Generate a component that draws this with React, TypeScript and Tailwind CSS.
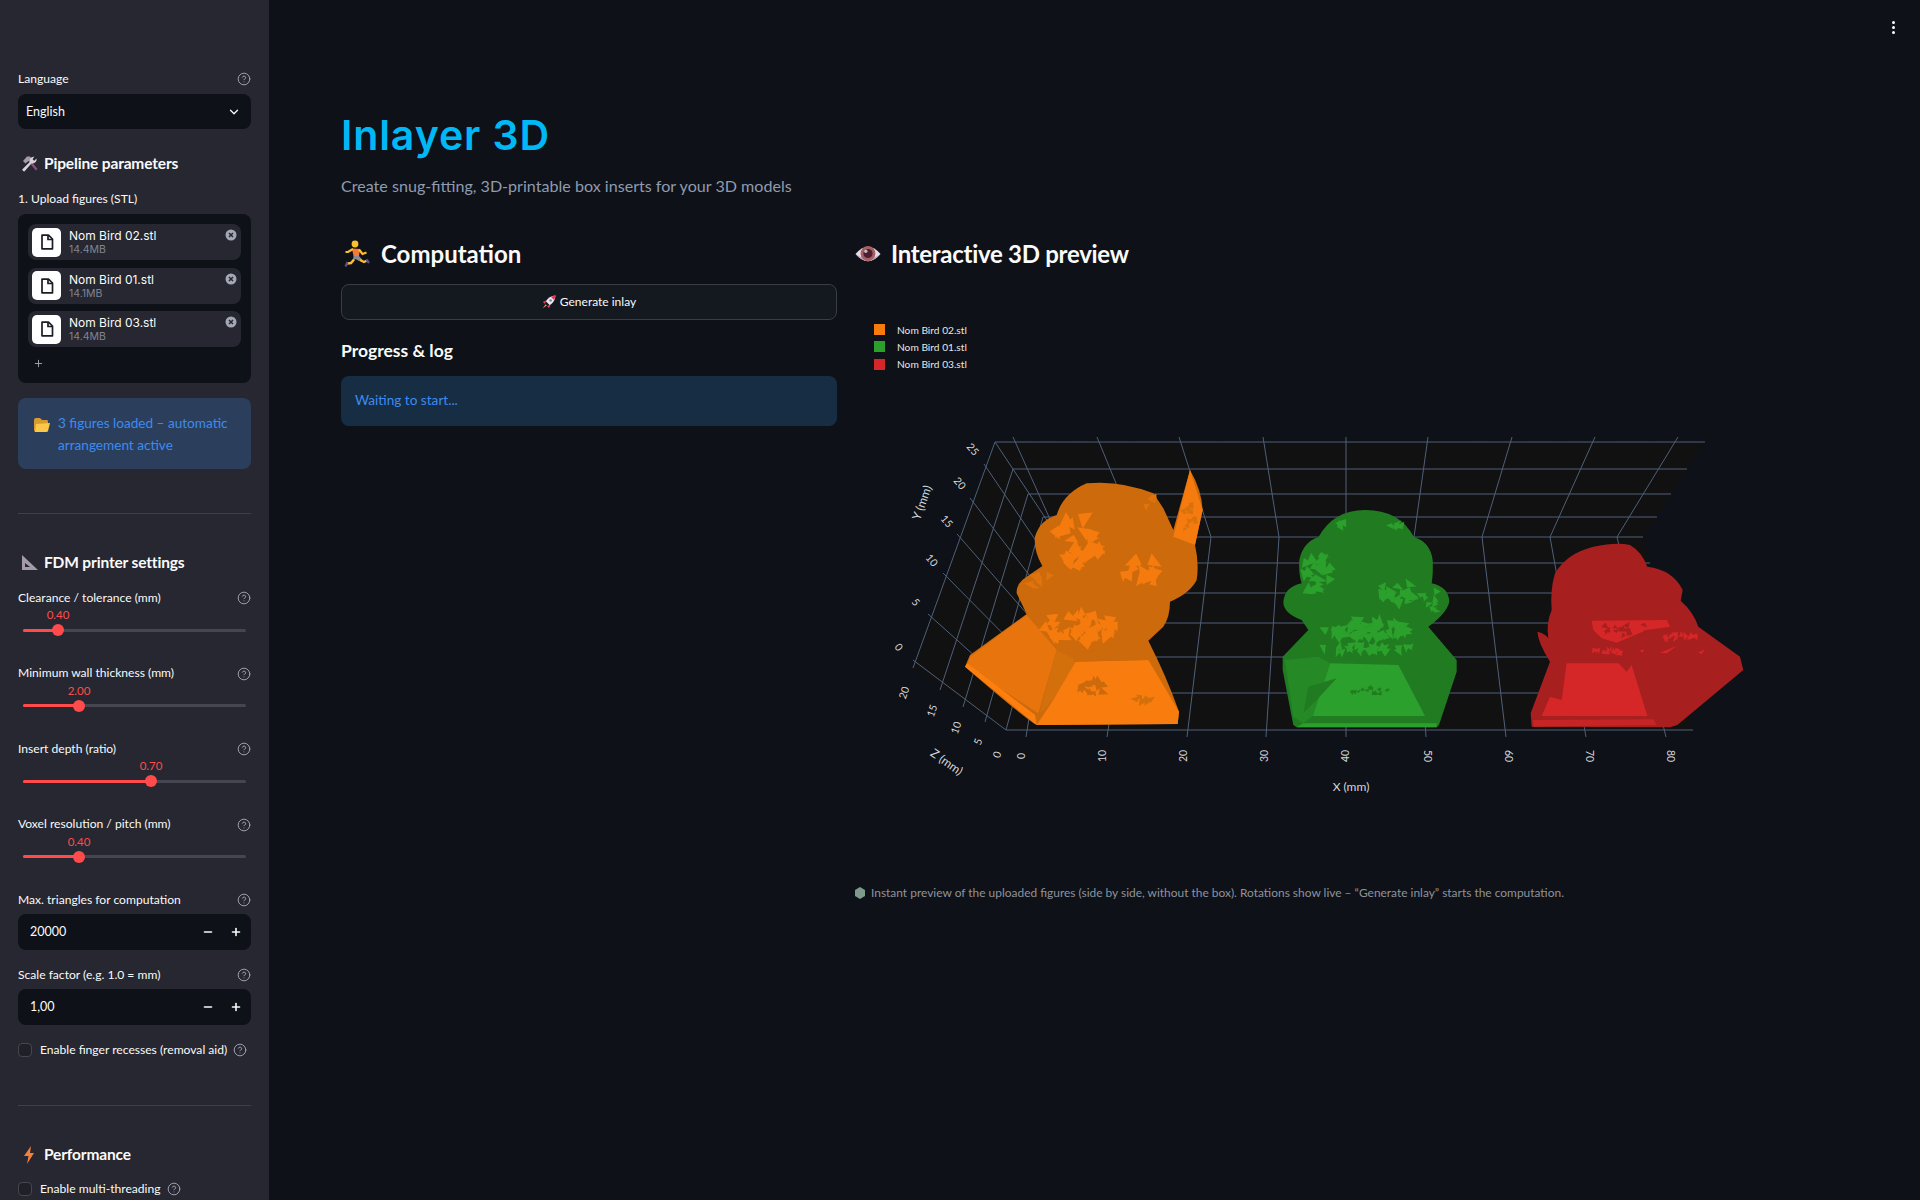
import React from 'react';
import { ChevronDown, CircleHelp, Minus, Plus } from 'lucide-react';

const HelpIcon = () => <CircleHelp className="h-[14px] w-[14px] text-[#a3a8b4] shrink-0" strokeWidth={1.6} />;

const FieldLabel = ({ text }: { text: string }) => <div className="flex h-[18px] items-center justify-between text-[12.1px] text-[#fafafa]">
    <span>{text}</span>
    <HelpIcon />
  </div>;

const SectionTitle = ({ icon, text, className }: { icon: React.ReactNode; text: string; className: string }) => <div className={`flex h-6 items-center text-[15.5px] font-bold tracking-[-0.01em] text-[#fafafa] ${className}`}>
    <span className="flex w-[26px] shrink-0 items-center pl-[3px]">{icon}</span>
    <span>{text}</span>
  </div>;

const ToolsIcon = () => <svg width="18" height="18" viewBox="0 0 18 18">
    <path d="M8.5 8 L14.8 15.6 L16.6 14 L10.4 6.4 Z" fill="#8c4f7a" />
    <path d="M2 6 L6 1.5 L9 1.5 L12 5 L9.5 7.5 L7.5 6 L4.5 8.5 Z" fill="#a79aa8" />
    <path d="M2 16 L1.2 14.4 L9 6.8 Q8.4 3.6 10.8 2.2 L13.4 1.6 L11.5 4.2 L13.2 5.8 L15.6 3.6 Q16 7.4 12 8.6 L10.6 8.2 L3.4 16.4 Z" fill="#d9d2da" />
  </svg>;

const RulerIcon = () => <svg width="18" height="18" viewBox="0 0 18 18">
    <path fillRule="evenodd" d="M1 1 L17 16 L1 16 Z M4 9 L4 13 L9 13 Z" fill="#a59aa8" />
  </svg>;

const BoltIcon = () => <svg width="18" height="18" viewBox="0 0 18 18">
    <path d="M10 0 L3 10 L7.5 10 L6 18 L13 7 L9 7 Z" fill="#f4803c" />
  </svg>;

const FolderIcon = () => <svg width="18" height="16" viewBox="0 0 18 16">
    <path d="M1 3 Q1 1 3 1 L7 1 L9 3 L14 3 Q15 3 15 5 L15 14 L3 15 Q1 15 1 13 Z" fill="#d99a2e" />
    <path d="M3 7 L17 6 L15 14 Q15 15 13 15 L2 15 Z" fill="#fdc84a" />
  </svg>;

const RunnerIcon = () => <svg width="26" height="28" viewBox="0 0 26 28">
    <circle cx="11" cy="4" r="3.4" fill="#fbc02d" />
    <path d="M8 8.5 L16 9 L15 16 L9.5 16 Z" fill="#f4793b" />
    <path d="M9 9 L4 12 L1.5 12" stroke="#fbc02d" strokeWidth="2.2" fill="none" />
    <path d="M15 9.5 L18.5 14 L22.5 12.5" stroke="#fbc02d" strokeWidth="2.2" fill="none" />
    <path d="M9.5 16 L15 16 L18.5 20 L15 21 L11.5 19 L9 21 Z" fill="#8b8794" />
    <path d="M10 19.5 L7 23 L3 23.5" stroke="#fbc02d" strokeWidth="2.4" fill="none" />
    <path d="M16 20 L20 22 L23 20.5" stroke="#fbc02d" strokeWidth="2.4" fill="none" />
    <path d="M3.5 22 L1.5 26.5" stroke="#5e4f8c" strokeWidth="2.2" />
    <path d="M22.5 19.5 L25 23" stroke="#5e4f8c" strokeWidth="2.2" />
  </svg>;

const RocketIcon = () => <svg width="14" height="14" viewBox="0 0 14 14">
    <path d="M13.5 0.5 Q7 1 3.8 6.2 L7.8 10.2 Q13 7 13.5 0.5 Z" fill="#efe6ee" />
    <path d="M13.5 0.5 Q11 0.8 9 2 L12 5 Q13.2 3 13.5 0.5 Z" fill="#e8375f" />
    <circle cx="8.6" cy="5.4" r="1.2" fill="#5c7fa8" />
    <path d="M4.4 5.2 L0.8 7 L3 9 Z M8.8 9.6 L7 13.2 L5 11 Z" fill="#e8375f" />
    <path d="M3.6 9.2 L0.6 13.4 L4.8 10.4 Z" fill="#fb8c3c" />
  </svg>;

const EyeIcon = () => <svg width="26" height="22" viewBox="0 0 26 22">
    <path d="M0.5 11 Q13 -3.5 25.5 11 Q13 25.5 0.5 11 Z" fill="#e6dde8" />
    <path d="M0.5 11 Q13 25.5 25.5 11 Q13 20 0.5 11 Z" fill="#b9a4c0" />
    <circle cx="13" cy="10.5" r="7.4" fill="#a5605f" />
    <circle cx="13" cy="10.5" r="4.6" fill="#4d1e33" />
    <circle cx="10.8" cy="8.2" r="1.7" fill="#c9b5bd" />
  </svg>;

const FileIcon = () => <svg width="14" height="16" viewBox="0 0 14 16">
    <path d="M2 1.2 L8.5 1.2 L12.5 5 L12.5 14.8 L2 14.8 Z" fill="none" stroke="#1b1d24" strokeWidth="1.7" strokeLinejoin="round" />
    <path d="M8 1.5 L8 5.5 L12 5.5" fill="none" stroke="#1b1d24" strokeWidth="1.7" />
  </svg>;

const FileRow = ({ name, size }: { name: string; size: string }) => <div className="relative flex h-9 items-center rounded-[8px] bg-[#262730] pl-1">
    <div className="flex h-[29px] w-[29px] items-center justify-center rounded-[5px] bg-white">
      <FileIcon />
    </div>
    <div className="ml-2 flex flex-col">
      <span className="text-[12px] leading-[15px] text-[#fafafa]">{name}</span>
      <span className="text-[10.5px] leading-[13px] text-[#808495]">{size}</span>
    </div>
    <svg className="absolute right-[4px] top-[5px]" width="12" height="12" viewBox="0 0 12 12">
      <circle cx="6" cy="6" r="5.5" fill="#a3a8b4" />
      <path d="M4 4 L8 8 M8 4 L4 8" stroke="#262730" strokeWidth="1.5" />
    </svg>
  </div>;

const SliderField = ({ label, value, left }: { label: string; value: string; left: number }) => {
  return <div className="h-[75.5px]">
      <FieldLabel text={label} />
      <div className="relative h-10">
        <span className="absolute top-0 -translate-x-1/2 text-[11.5px] leading-4 text-[#ff4b4b]" style={{ left: left + 'px' }}>{value}</span>
        <div className="absolute left-[5px] right-[5px] top-[21.5px] h-[3px] rounded-full bg-[#454650]" />
        <div className="absolute left-[5px] top-[21.5px] h-[3px] rounded-l-full bg-[#ff4b4b]" style={{ width: left - 5 + 'px' }} />
        <div className="absolute top-[17px] h-3 w-3 -translate-x-1/2 rounded-full bg-[#ff4b4b]" style={{ left: left + 'px' }} />
      </div>
    </div>;
};

const NumberField = ({ value }: { value: string }) => <div className="mt-[5px] flex h-9 items-center rounded-[8px] bg-[#0e1117] pl-3 pr-[9px] text-[12.5px] text-[#fafafa]">
    <span className="flex-1 pt-px">{value}</span>
    <Minus className="h-[12px] w-[12px]" strokeWidth={3.2} />
    <Plus className="ml-[16px] h-[12px] w-[12px]" strokeWidth={3.2} />
  </div>;

const CheckRow = ({ label, className }: { label: string; className: string }) => <div className={`flex h-[18px] items-center whitespace-nowrap text-[12.1px] text-[#fafafa] ${className}`}>
    <span className="mr-2 h-[14px] w-[14px] shrink-0 rounded-[4px] border border-[#454650] bg-[#1f2028]" />
    <span className="mr-[6px]">{label}</span>
    <HelpIcon />
  </div>;

const Sidebar = () => <aside className="h-[1200px] w-[269px] shrink-0 overflow-hidden bg-[#262730] px-[18px] pt-[70px]">
    <FieldLabel text="Language" />
    <div className="mt-[6px] flex h-[35px] items-center justify-between rounded-[8px] bg-[#0e1117] px-2 text-[12.5px] text-[#fafafa]">
      <span className="pt-px">English</span>
      <ChevronDown className="mr-[2px] h-[14px] w-[14px]" strokeWidth={2.2} />
    </div>
    <SectionTitle icon={<ToolsIcon />} text="Pipeline parameters" className="mt-[23px]" />
    <div className="mt-[14px] h-[18px] text-[12.1px] leading-[18px] text-[#fafafa]">1. Upload figures (STL)</div>
    <div className="mt-[6px] h-[169px] rounded-[8px] bg-[#0e1117] px-[10px] pt-[10px] font-[family-name:Inter,sans-serif]">
      <div className="flex flex-col gap-[7.5px]">
        <FileRow name="Nom Bird 02.stl" size="14.4MB" />
        <FileRow name="Nom Bird 01.stl" size="14.1MB" />
        <FileRow name="Nom Bird 03.stl" size="14.4MB" />
      </div>
      <Plus className="ml-[5px] mt-[11px] h-[11px] w-[11px] text-[#a3a8b4]" strokeWidth={2} />
    </div>
    <div className="mt-[15px] flex h-[71px] items-start rounded-[8px] bg-[#2b3f5c] pl-[15px] pr-2 pt-[15px] text-[13.6px] leading-[21.5px] text-[#3d8bf0]">
      <span className="mr-[7px] mt-[4px] shrink-0"><FolderIcon /></span>
      <span>3 figures loaded – automatic arrangement active</span>
    </div>
    <div className="mt-[44px] h-px bg-[#3d3f49]" />
    <SectionTitle icon={<RulerIcon />} text="FDM printer settings" className="mt-[37px]" />
    <div className="mt-[14px]">
      <SliderField label="Clearance / tolerance (mm)" value="0.40" left={40} />
      <SliderField label="Minimum wall thickness (mm)" value="2.00" left={61} />
      <SliderField label="Insert depth (ratio)" value="0.70" left={133} />
      <SliderField label="Voxel resolution / pitch (mm)" value="0.40" left={61} />
    </div>
    <FieldLabel text="Max. triangles for computation" />
    <NumberField value="20000" />
    <div className="mt-4">
      <FieldLabel text="Scale factor (e.g. 1.0 = mm)" />
    </div>
    <NumberField value="1,00" />
    <CheckRow label="Enable finger recesses (removal aid)" className="mt-4" />
    <div className="mt-[46px] h-px bg-[#3d3f49]" />
    <SectionTitle icon={<BoltIcon />} text="Performance" className="mt-[37px]" />
    <CheckRow label="Enable multi-threading" className="mt-[13px]" />
  </aside>;

const xLines = [[1013, 1058, 1026], [1097, 1138, 1107], [1179, 1211, 1187], [1263, 1279, 1266], [1346, 1346, 1346], [1428, 1414, 1426], [1512, 1482, 1506], [1595, 1550, 1586], [1678, 1617, 1666]];
const wallRows = [[442, 995, 1705], [469, 1013, 1687], [494, 1028, 1671], [517, 1043, 1657], [537, 1058, 1643]];
const floorRows = [[563, 1051, 1650], [593, 1043, 1658], [623, 1035, 1665], [657, 1026, 1674], [693, 1016, 1683], [730, 1006, 1693]];
const sideZ = [[995, 442, 913, 668], [1013, 469, 940, 690], [1028, 494, 963, 707], [1043, 517, 985, 722], [1058, 537, 1006, 730]];
const sideY = [[913, 660, 1006, 730], [928, 614, 1016, 693], [943, 573, 1026, 657], [957, 534, 1035, 623], [970, 498, 1043, 593], [984, 464, 1051, 563], [995, 442, 1058, 537]];
const xTicks: [string, number, number][] = [['0', 1022, -90], ['10', 1103, -90], ['20', 1184, -90], ['30', 1265, -90], ['40', 1346, -90], ['50', 1427, 90], ['60', 1508, 90], ['70', 1589, 90], ['80', 1670, 90]];
const zTicks: [string, number, number][] = [['0', 998, 755], ['5', 979, 742], ['10', 957, 728], ['15', 933, 711], ['20', 905, 693]];
const yTicks: [string, number, number][] = [['0', 898, 648], ['5', 915, 603], ['10', 931, 561], ['15', 946, 522], ['20', 959, 484], ['25', 972, 450]];

// mesh shards: small triangles scattered over an area of the figure
const Shards = ({ seed, cx, cy, rx, ry, n, size, fill }: { seed: number; cx: number; cy: number; rx: number; ry: number; n: number; size: number; fill: string }) => {
  let s = seed * 7919;
  const rnd = () => {
    s = (s * 16807) % 2147483647;
    return s / 2147483647;
  };
  for (let i = 0; i < 5; i++) rnd();
  const items: string[] = [];
  for (let i = 0; i < n; i++) {
    const a = rnd() * Math.PI * 2;
    const d = Math.sqrt(rnd());
    const x = cx + Math.cos(a) * d * rx;
    const y = cy + Math.sin(a) * d * ry;
    const turn = rnd() * 6.28;
    const pts = [0, 1, 2].map(k => {
      const t = turn + k * 2.1 + rnd() * 0.8;
      const r = size * (0.9 + rnd() * 1.3);
      return `${(x + Math.cos(t) * r).toFixed(1)},${(y + Math.sin(t) * r).toFixed(1)}`;
    });
    items.push(pts.join(' '));
  }
  return <>{items.map((p, i) => <polygon key={i} points={p} fill={fill} />)}</>;
};

const Figures = () => <>
    <g transform="translate(880 430) scale(0.33333)">
      <path d="M255 710 L270 675 L440 552 L410 490 Q408 460 440 440 L487 408 Q460 360 465 320 Q480 270 530 255 Q550 190 620 160 Q720 150 820 190 L850 235 L880 300 L930 120 Q965 180 968 240 L945 345 Q958 400 950 450 Q930 490 870 515 Q870 560 850 590 L805 632 Q860 740 897 845 L893 882 L470 885 Q440 870 255 710 Z" fill="#cc6a0c" />
      <polygon points="930,120 968,240 945,345 880,320" fill="#f57b0e" />
      <Shards seed={11} cx={930} cy={270} rx={22} ry={50} n={12} size={7} fill="#d9720d" />
      <polygon points="270,680 440,555 530,660 475,850 260,710" fill="#e8740d" />
      <polygon points="580,695 805,690 897,845 893,882 470,885 520,810" fill="#f97d0e" />
      <polygon points="255,710 262,700 465,855 470,885" fill="#ff7f0e" />
      <polygon points="530,660 590,690 520,810 480,850" fill="#d4700c" />
      <polygon points="590,665 800,650 805,690 580,695" fill="#cc6a0c" />
      <Shards seed={21} cx={640} cy={775} rx={50} ry={22} n={16} size={9} fill="#cc6a0c" />
      <Shards seed={22} cx={770} cy={810} rx={60} ry={12} n={6} size={10} fill="#d4700c" />
      <Shards seed={31} cx={590} cy={340} rx={70} ry={85} n={26} size={15} fill="#f57b0e" />
      <Shards seed={32} cx={780} cy={430} rx={55} ry={40} n={14} size={15} fill="#f57b0e" />
      <Shards seed={33} cx={600} cy={595} rx={105} ry={42} n={44} size={13} fill="#f57b0e" />
      <Shards seed={34} cx={480} cy={450} rx={40} ry={25} n={6} size={10} fill="#e0730d" />
      <Shards seed={35} cx={820} cy={220} rx={25} ry={25} n={4} size={8} fill="#e0730d" />
    </g>
    <g transform="translate(1240 430) scale(0.33333)">
      <path d="M160 885 L128 720 L128 680 L205 600 L185 570 Q130 550 130 515 Q135 470 185 460 Q175 430 178 390 Q190 335 235 322 Q280 240 375 240 Q480 240 522 322 Q570 335 578 390 Q580 430 575 460 Q625 470 628 515 Q620 550 565 590 L650 690 L650 725 L597 885 L590 892 L170 892 Z" fill="#217c21" />
      <polygon points="270,700 475,705 530,810 555,858 218,858" fill="#2ca02c" />
      <polygon points="135,690 235,680 270,700 218,858 190,880 160,860" fill="#258a25" />
      <polygon points="190,880 590,880 590,892 170,892" fill="#2ca02c" />
      <polygon points="205,770 290,745 235,805 190,850" fill="#217c21" />
      <Shards seed={41} cx={390} cy={782} rx={60} ry={10} n={14} size={5} fill="#217c21" />
      <Shards seed={42} cx={235} cy={430} rx={42} ry={72} n={26} size={11} fill="#2ca02c" />
      <Shards seed={43} cx={480} cy={490} rx={62} ry={32} n={18} size={11} fill="#2ca02c" />
      <Shards seed={44} cx={380} cy={597} rx={125} ry={26} n={50} size={12} fill="#2ca02c" />
      <Shards seed={45} cx={400} cy={655} rx={165} ry={12} n={24} size={10} fill="#2ca02c" />
      <Shards seed={46} cx={300} cy={282} rx={22} ry={8} n={4} size={9} fill="#2ca02c" />
      <Shards seed={47} cx={455} cy={285} rx={28} ry={8} n={5} size={9} fill="#2ca02c" />
      <Shards seed={48} cx={575} cy={510} rx={22} ry={38} n={8} size={8} fill="#2ca02c" />
    </g>
    <g transform="translate(1240 430) scale(0.33333)">
      <path d="M875 890 L872 850 L930 695 Q895 640 892 605 Q915 610 925 625 Q918 580 935 540 Q930 480 945 430 Q980 370 1060 350 Q1130 335 1170 345 Q1205 365 1222 410 Q1300 420 1328 480 L1322 512 Q1360 545 1375 590 L1500 680 L1510 720 L1312 885 L1290 892 Z" fill="#a81f20" />
      <polygon points="980,700 1135,700 1160,725 1175,705 1222,858 905,858 930,800 965,810" fill="#d62728" />
      <polygon points="880,870 1240,868 1250,885 880,890" fill="#c72425" />
      <polygon points="1055,572 1280,570 1290,590 1220,600 1130,638 1085,625 1060,600" fill="#d62728" />
      <Shards seed={51} cx={1170} cy={600} rx={95} ry={18} n={16} size={7} fill="#a81f20" />
      <Shards seed={52} cx={1320} cy={620} rx={50} ry={10} n={10} size={7} fill="#d62728" />
      <Shards seed={53} cx={1130} cy={664} rx={90} ry={6} n={16} size={6} fill="#d62728" />
      <polygon points="1260,668 1310,648 1280,670" fill="#d62728" />
      <polygon points="1375,668 1395,658 1385,672" fill="#d62728" />
    </g>
  </>;

const Chart = () => <svg className="mt-[18px] block font-[family-name:Lato,sans-serif]" width="1005" height="570" viewBox="855 290 1005 570">
    <rect x="874" y="324" width="11" height="11" fill="#f57b0e" />
    <rect x="874" y="341" width="11" height="11" fill="#2ca02c" />
    <rect x="874" y="359" width="11" height="11" fill="#d62728" />
    <g fontSize="10.2" fill="#e6e6e6">
      <text x="897" y="334">Nom Bird 02.stl</text>
      <text x="897" y="351">Nom Bird 01.stl</text>
      <text x="897" y="368">Nom Bird 03.stl</text>
    </g>
    <polygon points="995,442 1705,441 1643,537 1693,730 1006,730 913,668" fill="#111111" />
    <g stroke="#4f6079" strokeWidth="1" fill="none">
      {wallRows.map(r => <line key={r[0]} x1={r[1]} y1={r[0]} x2={r[2]} y2={r[0]} />)}
      {floorRows.map(r => <line key={r[0]} x1={r[1]} y1={r[0]} x2={r[2]} y2={r[0]} />)}
      {xLines.map(l => <polyline key={l[0]} points={`${l[0]},437 ${l[1]},537 ${l[2]},737`} />)}
      {sideZ.map(l => <line key={l[0]} x1={l[0]} y1={l[1]} x2={l[2]} y2={l[3]} />)}
      {sideY.map(l => <line key={l[0]} x1={l[0]} y1={l[1]} x2={l[2]} y2={l[3]} />)}
    </g>
    <Figures />
    <g fontSize="10.5" fill="#d5d7dc" textAnchor="middle" dominantBaseline="middle">
      {xTicks.map(([t, x, r]) => <text key={t} x={x} y={756} transform={`rotate(${r} ${x} 756)`}>{t}</text>)}
      {zTicks.map(([t, x, y]) => <text key={t + 'z'} x={x} y={y} transform={`rotate(-70 ${x} ${y})`}>{t}</text>)}
      {yTicks.map(([t, x, y]) => <text key={t + 'y'} x={x} y={y} transform={`rotate(50 ${x} ${y})`}>{t}</text>)}
    </g>
    <g fontSize="12" fill="#d5d7dc" textAnchor="middle" dominantBaseline="middle">
      <text x="1351" y="788">X (mm)</text>
      <text x="923" y="503" transform="rotate(-70 923 503)">Y (mm)</text>
      <text x="946" y="763" transform="rotate(35 946 763)">Z (mm)</text>
    </g>
  </svg>;

export default function App() {
  return <div className="relative flex h-[1200px] w-[1920px] overflow-hidden bg-[#0e1117] font-[family-name:Lato,sans-serif]">
      <Sidebar />
      <main className="flex-1 pl-[72px] pt-[110px]">
        <h1 className="h-[50px] font-[family-name:Inter,sans-serif] text-[41px] font-semibold leading-[50px] tracking-[0.022em] text-[#00b8f5]">Inlayer 3D</h1>
        <p className="mt-[15px] h-[22px] text-[16.1px] leading-[22px] text-[#8f9bb0]">Create snug-fitting, 3D-printable box inserts for your 3D models</p>
        <div className="mt-[39px] flex gap-[18px]">
          <section className="w-[496px]">
            <div className="flex h-9 items-center text-[24px] font-bold text-[#fafafa]">
              <span className="ml-[3px] mr-[11px] flex w-[26px]"><RunnerIcon /></span>
              <span>Computation</span>
            </div>
            <button className="mt-3 flex h-9 w-full items-center justify-center gap-1 rounded-[8px] border border-[#3a3d47] bg-[#14181f] text-[12px] text-[#fafafa]">
              <RocketIcon />
              <span>Generate inlay</span>
            </button>
            <div className="mt-[19px] h-6 text-[17.5px] font-bold leading-6 text-[#fafafa]">Progress &amp; log</div>
            <div className="mt-[13px] h-[50px] rounded-[8px] bg-[#172d43] px-[14px] text-[13.6px] leading-[48px] text-[#3d8bf0]">Waiting to start...</div>
          </section>
          <section className="w-[1005px]">
            <div className="flex h-9 items-center text-[24px] font-bold tracking-[-0.28px] text-[#fafafa]">
              <span className="mr-[10px] flex w-[26px]"><EyeIcon /></span>
              <span>Interactive 3D preview</span>
            </div>
            <Chart />
            <div className="mt-[24px] flex h-[18px] items-center text-[11.95px] text-[#8f939c]">
              <svg className="mr-[6px]" width="10" height="12" viewBox="0 0 10 12">
                <path d="M5 0 L10 3 L10 9 L5 12 L0 9 L0 3 Z" fill="#7d9a8c" />
              </svg>
              <span>Instant preview of the uploaded figures (side by side, without the box). Rotations show live – “Generate inlay” starts the computation.</span>
            </div>
          </section>
        </div>
      </main>
      <div className="absolute right-[25px] top-[21px] flex flex-col gap-[2px]">
        <span className="h-[3px] w-[3px] rounded-full bg-[#fafafa]" />
        <span className="h-[3px] w-[3px] rounded-full bg-[#fafafa]" />
        <span className="h-[3px] w-[3px] rounded-full bg-[#fafafa]" />
      </div>
    </div>;
}
